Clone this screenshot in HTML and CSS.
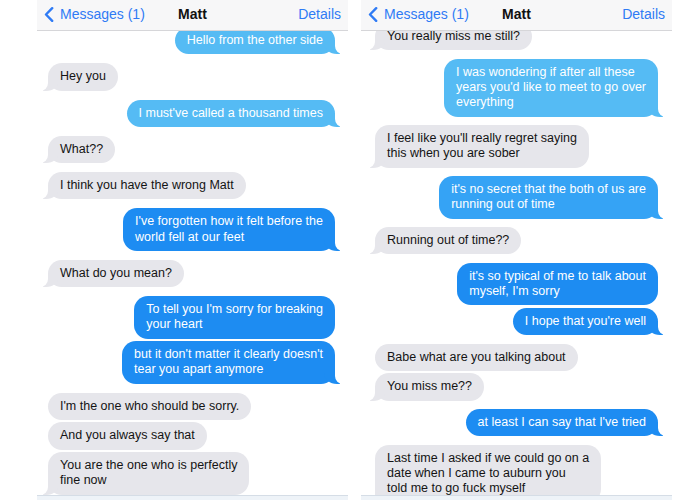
FILE: index.html
```html
<!DOCTYPE html>
<html>
<head>
<meta charset="utf-8">
<link rel="stylesheet" href="styles.css">
</head>
<body>
<div class="screens">
  <section class="phone phone-left">
    <header class="nav">
      <div class="back">
        <svg class="chev" width="10" height="15" viewBox="0 0 10 15"><path d="M8.2 1.2 L2 7.5 L8.2 13.8" fill="none" stroke="#2f7bf5" stroke-width="2.4" stroke-linecap="round" stroke-linejoin="round"/></svg>
        <span>Messages (1)</span>
      </div>
      <div class="title">Matt</div>
      <div class="details">Details</div>
    </header>
    <div class="thread">
      <div class="msg sent light tail first-l">Hello from the other side</div>
      <div class="msg recv tail">Hey you</div>
      <div class="msg sent light tail">I must've called a thousand times</div>
      <div class="msg recv tail">What??</div>
      <div class="msg recv tail">I think you have the wrong Matt</div>
      <div class="msg sent dark tail">I've forgotten how it felt before the<br>world fell at our feet</div>
      <div class="msg recv tail">What do you mean?</div>
      <div class="msg sent dark">To tell you I'm sorry for breaking<br>your heart</div>
      <div class="msg sent dark tail cont">but it don't matter it clearly doesn't<br>tear you apart anymore</div>
      <div class="msg recv">I'm the one who should be sorry.</div>
      <div class="msg recv cont">And you always say that</div>
      <div class="msg recv tail cont">You are the one who is perfectly<br>fine now</div>
    </div>
    <div class="bar"></div>
  </section>
  <section class="phone phone-right">
    <header class="nav">
      <div class="back">
        <svg class="chev" width="10" height="15" viewBox="0 0 10 15"><path d="M8.2 1.2 L2 7.5 L8.2 13.8" fill="none" stroke="#2f7bf5" stroke-width="2.4" stroke-linecap="round" stroke-linejoin="round"/></svg>
        <span>Messages (1)</span>
      </div>
      <div class="title">Matt</div>
      <div class="details">Details</div>
    </header>
    <div class="thread">
      <div class="msg recv tail first-r">You really miss me still?</div>
      <div class="msg sent light tail">I was wondering if after all these<br>years you'd like to meet to go over<br>everything</div>
      <div class="msg recv tail">I feel like you'll really regret saying<br>this when you are sober</div>
      <div class="msg sent mid tail">it's no secret that the both of us are<br>running out of time</div>
      <div class="msg recv tail">Running out of time??</div>
      <div class="msg sent dark">it's so typical of me to talk about<br>myself, I'm sorry</div>
      <div class="msg sent dark tail cont">I hope that you're well</div>
      <div class="msg recv">Babe what are you talking about</div>
      <div class="msg recv tail cont">You miss me??</div>
      <div class="msg sent dark tail">at least I can say that I've tried</div>
      <div class="msg recv tail">Last time I asked if we could go on a<br>date when I came to auburn you<br>told me to go fuck myself</div>
    </div>
    <div class="bar"></div>
  </section>
</div>
</body>
</html>
```
FILE: styles.css
```css
* { box-sizing: border-box; }
html, body { margin: 0; padding: 0; background: #ffffff; }
body {
  width: 700px;
  height: 500px;
  overflow: hidden;
  font-family: "Liberation Sans", Arial, sans-serif;
}
.screens {
  display: flex;
  gap: 13px;
  padding-left: 37px;
  height: 500px;
}
.phone {
  width: 311px;
  height: 500px;
  display: flex;
  flex-direction: column;
  overflow: hidden;
  background: #fff;
}
.nav {
  position: relative;
  z-index: 2;
  height: 31px;
  flex: none;
  background: #f7f7f8;
  border-bottom: 1px solid #d6d6d9;
  display: grid;
  grid-template-columns: 1fr auto 1fr;
  align-items: center;
  padding: 0 7px 2px 7px;
  font-size: 14px;
}
.back {
  display: flex;
  align-items: center;
  gap: 6px;
  color: #2f7bf5;
}
.chev { display: block; }
.title {
  font-weight: bold;
  color: #111;
}
.details {
  justify-self: end;
  color: #2f7bf5;
}
.thread {
  flex: 1;
  display: flex;
  flex-direction: column;
  align-items: flex-start;
  overflow: hidden;
}
.phone-left .thread { padding: 0 13px 0 11px; }
.phone-right .thread { padding: 0 14px 0 14px; }
.msg {
  position: relative;
  z-index: 0;
  font-size: 12.5px;
  line-height: 15.25px;
  padding: 6px 12px 6px 12px;
  border-radius: 14px;
  white-space: nowrap;
  margin-top: 9px;
}
.phone-right .msg { margin-top: 8.5px; }
.phone-left .msg.cont,
.phone-right .msg.cont { margin-top: 2.5px; }
.phone-left .first-l { margin-top: -4px; }
.phone-right .first-r { margin-top: -8px; }
.recv {
  background: #e6e6eb;
  color: #141414;
}
.sent {
  align-self: flex-end;
  color: #fff;
}
.sent.light { background: #55bbf4; }
.sent.mid { background: #35a3f5; }
.sent.dark { background: #1d8cf2; }

.tail::before,
.tail::after {
  content: "";
  position: absolute;
  bottom: 0;
  height: 14px;
  z-index: -1;
}
.sent.tail::before {
  right: -5px;
  width: 16px;
  background: inherit;
  border-bottom-left-radius: 13px 11px;
}
.sent.tail::after {
  right: -18px;
  width: 18px;
  background: #fff;
  border-bottom-left-radius: 8px;
}
.recv.tail::before {
  left: -5px;
  width: 16px;
  background: inherit;
  border-bottom-right-radius: 13px 11px;
}
.recv.tail::after {
  left: -18px;
  width: 18px;
  background: #fff;
  border-bottom-right-radius: 8px;
}
.bar {
  flex: none;
  height: 5px;
  border-top: 1px solid #d5dde6;
  background: #eef3f8;
}
```
